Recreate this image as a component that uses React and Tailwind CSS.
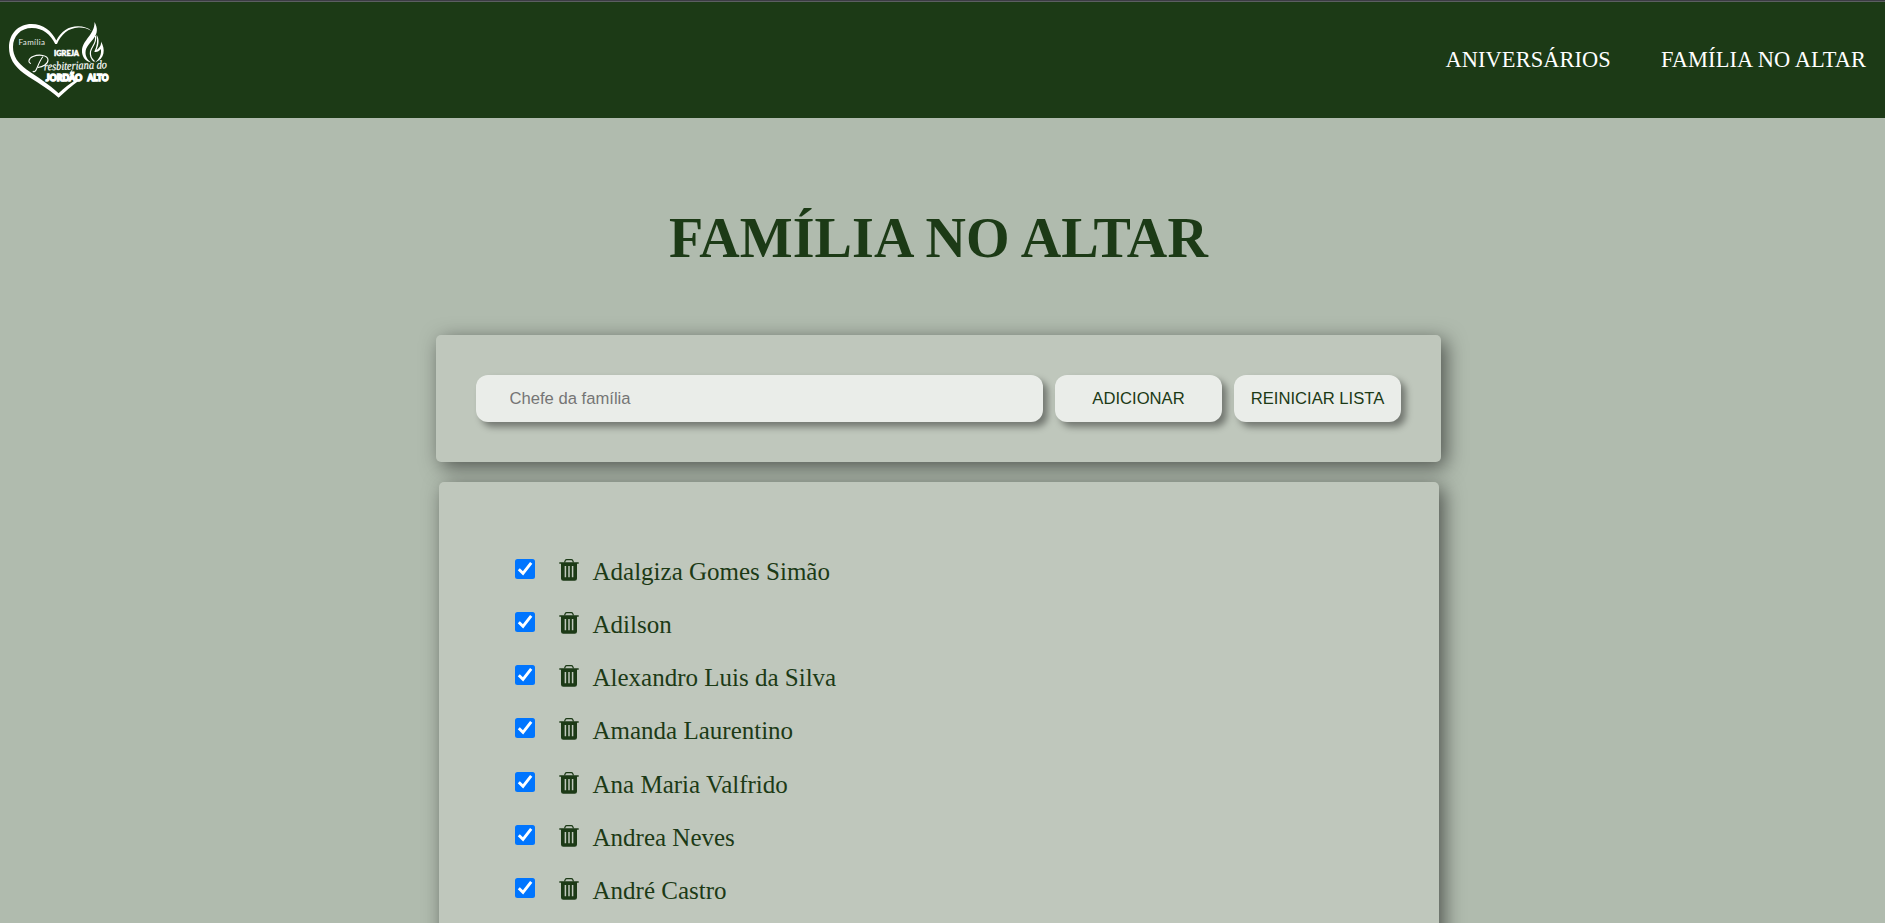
const names = [
  'Adalgiza Gomes Simão',
  'Adilson',
  'Alexandro Luis da Silva',
  'Amanda Laurentino',
  'Ana Maria Valfrido',
  'Andrea Neves',
  'André Castro',
];

function Logo() {
  return (
    <svg className="h-[118px] w-[125px] shrink-0 overflow-visible" viewBox="0 0 125 118" fill="none" aria-label="Logo">
      <path d="M58.600 97.800C48 88 35 81.500 24 73.500C14 66 9 58 9 47.500C9 33.500 18.500 24 31.500 24C43.500 24 51.500 31 56.300 40.500C61 31.500 68.500 26.300 78 26.300C83.500 26.300 88 27.800 91.500 31C87.500 28.500 83 27.400 78.500 27.600C68.500 28 61 34.500 57 44H55.200C50.500 34.500 43 28 32 28C20.500 28 13 36 13 47C13 56.500 18 63 26.500 69.500C37 77 49 84 58.600 93.300C64 88 70 83.500 75 80.500H79C72 85.500 65 91.500 58.600 97.800Z" fill="#fff" />
      <path d="M94.500 22C98 28.500 97.500 33 94 38C90.500 43 85.500 47 85.500 52.500C85.500 57 88 60.500 91.500 62.500C85 61.500 81.500 56 82 50C82.800 40 95 34 94.500 22Z" fill="#fff" />
      <path d="M95.500 36C97 43 91.500 46.500 90.500 51.500C89.800 55.500 91.500 59 94.500 61.500" stroke="#fff" strokeWidth="1.200" />
      <path d="M96.500 34.500C99.500 39 99 44 96.500 50C99.500 48 101.500 45 101 41.500C105.500 49.500 105 58.500 95 62.500C99.500 58.500 101.800 54 100.800 49C99 51.500 96.500 52.500 94.300 51.800C97 46.500 97.800 41 96.500 34.500Z" fill="#fff" />
      <path d="M33 71C33.500 72.500 35.500 72 37 68C39 63 41 59 43 56.500M31 63.500C28 63 28 58.500 33 56.500C39 54 48 55 48 60C48 64 43 67 38 67.500" stroke="#fff" strokeWidth="1.100" />
      <text x="18.500" y="45" fill="#e7ece6" fontFamily="Lato, sans-serif" fontSize="8" textLength="26.500">Família</text>
      <text x="54" y="56" fill="#fff" stroke="#fff" strokeWidth=".5" fontFamily="Lato, sans-serif" fontWeight="900" fontSize="7.300" textLength="25" lengthAdjust="spacingAndGlyphs">IGREJA</text>
      <text x="44" y="70.500" fill="#fff" stroke="#fff" strokeWidth=".2" fontFamily="'Liberation Serif', cursive" fontStyle="italic" fontSize="12" textLength="63" lengthAdjust="spacingAndGlyphs" transform="rotate(-2 44 70.500)">resbiteriana do</text>
      <path d="M68 73.500C66.500 77 70 76.500 72 70" stroke="#fff" strokeWidth=".8" />
      <text x="45.700" y="81.200" fill="#fff" stroke="#fff" strokeWidth="1.500" fontFamily="Lato, sans-serif" fontWeight="900" fontSize="10" textLength="36.500" lengthAdjust="spacingAndGlyphs">JORDÃO</text>
      <text x="87.500" y="81.200" fill="#fff" stroke="#fff" strokeWidth="1.500" fontFamily="Lato, sans-serif" fontWeight="900" fontSize="10" textLength="21" lengthAdjust="spacingAndGlyphs">ALTO</text>
    </svg>
  );
}

function TrashIcon() {
  return (
    <svg className="h-[22px] w-5 shrink-0" viewBox="0 0 20 22" fill="none">
      <path d="M5.500 3.500L6.300 1.600Q6.700.7 7.700.7H12.300Q13.300.7 13.700 1.600L14.500 3.500" stroke="#1c3a16" strokeWidth="1.200" />
      <path d="M.3 3.200H19.700V4.800H18V19.500Q18 21.800 15.700 21.800H4.300Q2 21.800 2 19.500V4.800H.3Z" fill="#1c3a16" />
      <path d="M6.400 7V18.300M10 7V18.300M13.600 7V18.300" stroke="#bfc7bc" strokeWidth="1.500" />
    </svg>
  );
}

function CheckedBox() {
  return (
    <span role="checkbox" aria-checked="true" className="flex size-5 shrink-0 items-center justify-center rounded-[2.5px] bg-[#0075ff]">
      <svg className="size-5" viewBox="0 0 20 20" fill="none">
        <path d="M3.800 10.300L8 14.300L16.200 3.900" stroke="#fff" strokeWidth="2.900" />
      </svg>
    </span>
  );
}

export default function App() {
  return (
    <div className="h-[923px] overflow-hidden bg-[#b0bbae] font-['Liberation_Serif',serif] text-[#1c3a16]">
      <header className="flex h-[118px] items-center justify-between border-t border-[#3c3c44] bg-[#1c3a16] pr-[19px] shadow-[inset_0_1px_0_#5b5f61]">
        <a href="#" className="-mt-px"><Logo /></a>
        <nav className="flex gap-[50px] pt-px text-[22.4px] tracking-[0.1px] text-white">
          <a href="#">ANIVERSÁRIOS</a>
          <a href="#">FAMÍLIA NO ALTAR</a>
        </nav>
      </header>
      <main className="flex w-[1877px] flex-col items-center">
        <h1 className="mt-[88px] h-[129px] text-[56px] leading-[64px] font-bold tracking-[0.1px]">FAMÍLIA NO ALTAR</h1>
        <form className="z-10 flex h-[127px] w-[1005px] items-center gap-3 rounded-[5px] bg-[#bfc7bc] px-10 font-['Liberation_Sans',sans-serif] text-[16.64px] shadow-[5px_5px_20px_rgba(0,0,0,0.55)]">
          <input placeholder="Chefe da família" className="h-[47px] w-[567px] rounded-[12px] bg-[#eaede9] px-[33.5px] placeholder:text-[#757575] shadow-[5px_5px_7px_rgba(0,0,0,0.4)]" />
          <button type="button" className="h-[47px] w-[167px] rounded-[12px] bg-[#eaede9] pt-px shadow-[5px_5px_7px_rgba(0,0,0,0.4)]">ADICIONAR</button>
          <button type="button" className="h-[47px] w-[167px] rounded-[12px] bg-[#eaede9] pt-px shadow-[5px_5px_7px_rgba(0,0,0,0.4)]">REINICIAR LISTA</button>
        </form>
        <ul className="z-20 mt-5 h-[500px] w-[1000px] rounded-[5px] bg-[#bfc7bc] pt-[75px] pl-[76px] shadow-[5px_5px_20px_rgba(0,0,0,0.55)]">
          {names.map((name) => (
            <li key={name} className="flex h-[53.17px] items-start">
              <div className="pt-[2px]"><CheckedBox /></div>
              <div className="ml-6 pt-[2px]"><TrashIcon /></div>
              <span className="ml-3.5 text-[25px] leading-[29px]">{name}</span>
            </li>
          ))}
        </ul>
      </main>
    </div>
  );
}
